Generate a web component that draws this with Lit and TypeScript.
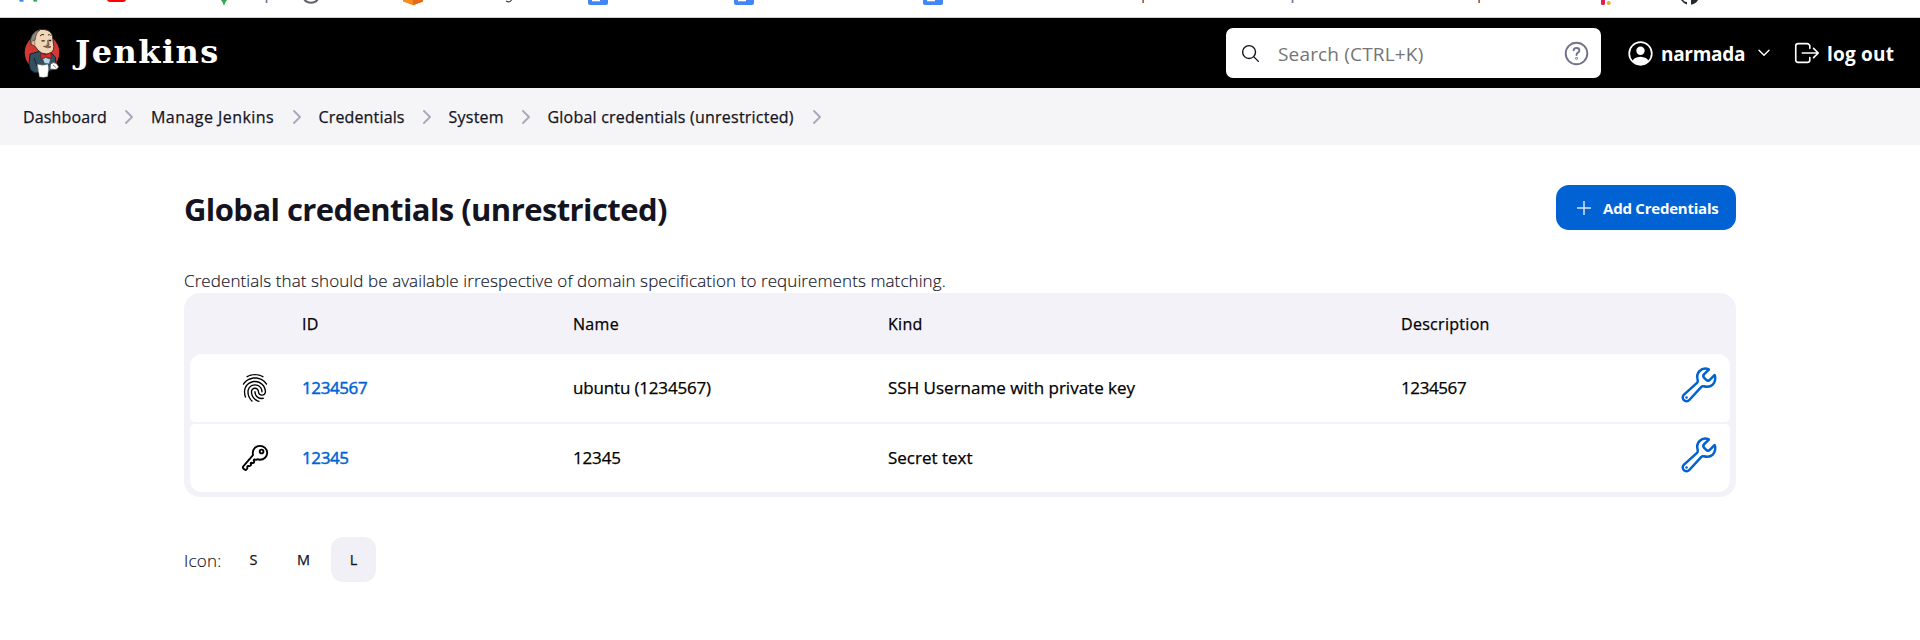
import { LitElement, html, css, svg } from "lit";
import { customElement } from "lit/decorators.js";

const FINGERPRINT =
  "M390.42 75.28a10.45 10.45 0 01-5.32-1.44C340.72 50.08 302.35 40 256.35 40c-45.77 0-89.23 11.28-128.76 33.84C122 77 115.11 74.8 111.87 69a12.4 12.4 0 014.63-16.32A281.81 281.81 0 01256.35 16c49.23 0 92.23 11.28 139.39 36.48a12 12 0 014.85 16.08 11.3 11.3 0 01-10.17 6.72zm-330.79 126a11.73 11.73 0 01-6.7-2.16 12.26 12.26 0 01-2.78-16.8c22.89-33.6 52-60 86.69-78.48 72.58-38.88 165.52-39.12 238.33-.24 34.68 18.48 63.8 44.64 86.69 78a12.29 12.29 0 01-2.78 16.8 11.26 11.26 0 01-16.18-2.88c-20.8-30.24-47.15-54-78.36-70.56-66.34-35.28-151.18-35.28-217.29.24-31.44 16.8-57.79 40.8-78.59 71a10 10 0 01-9.03 5.08zM204.1 491a10.66 10.66 0 01-8.09-3.6C175.9 466.48 165 453 149.55 424c-16-29.52-24.27-65.52-24.27-104.16 0-71.28 58.71-129.36 130.84-129.36S387 248.56 387 319.84a11.56 11.56 0 11-23.11 0c0-58.08-48.32-105.36-107.72-105.36S148.4 261.76 148.4 319.84c0 34.56 7.39 66.48 21.49 92.4 14.8 27.6 25 39.36 42.77 58.08a12.67 12.67 0 010 17 12.44 12.44 0 01-8.56 3.68zm165.75-44.4c-27.51 0-51.78-7.2-71.66-21.36a129.1 129.1 0 01-55-105.36 11.57 11.57 0 1123.12 0 104.28 104.28 0 0044.84 85.44c16.41 11.52 35.6 17 58.72 17a147.41 147.41 0 0024-2.4c6.24-1.2 12.25 3.12 13.4 9.84a11.92 11.92 0 01-9.47 13.92 152.28 152.28 0 01-27.95 2.88zM323.38 496a13 13 0 01-3-.48c-36.76-10.56-60.8-24.72-86-50.4-32.37-33.36-50.16-77.76-50.16-125.28 0-38.88 31.9-70.56 71.19-70.56s71.2 31.68 71.2 70.56c0 25.68 21.5 46.56 48.08 46.56s48.08-20.88 48.08-46.56c0-90.48-75.13-163.92-167.59-163.92-65.65 0-125.75 37.92-152.79 96.72-9 19.44-13.64 42.24-13.64 67.2 0 18.72 1.61 48.24 15.48 86.64 2.32 6.24-.69 13.2-6.7 15.36a11.34 11.34 0 01-14.79-7 276.39 276.39 0 01-16.88-95c0-28.8 5.32-55 15.72-77.76 30.75-67 98.94-110.4 173.6-110.4 105.18 0 190.71 84.24 190.71 187.92 0 38.88-31.9 70.56-71.2 70.56s-71.2-31.68-71.2-70.56C303.5 293.92 282 273 255.42 273s-48.08 20.88-48.08 46.56c0 41 15.26 79.44 43.23 108.24 22 22.56 43 35 75.59 44.16 6.24 1.68 9.71 8.4 8.09 14.64a11.39 11.39 0 01-10.87 9.4z";
const KEY =
  "M218.1 167.17c0 13 0 25.6 4.1 37.4-43.1 50.6-156.9 184.3-167.5 194.5a20.17 20.17 0 00-6.7 15c0 8.5 5.2 16.7 9.6 21.3 6.6 6.9 34.8 33 40 28 15.4-15 18.5-19 24.8-25.2 9.5-9.3-1-28.3 2.3-36s6.8-9.2 12.5-10.4 15.8 2.9 23.7 3c8.3.1 12.8-3.4 19-9.2 5-4.6 8.6-8.9 8.7-15.6.2-9-12.8-20.9-3.1-30.4s23.7 6.2 34 5 22.8-15.5 24.1-21.6-11.7-21.8-9.7-30.7c.7-3 6.8-10 11.4-11s25 6.9 29.6 5.9c5.6-1.2 12.1-7.1 17.4-10.4 15.5 6.7 29.6 9.4 47.7 9.4 68.5 0 124-53.4 124-119.2S408.5 48 340 48s-121.9 53.37-121.9 119.17zM400 144a32 32 0 11-32-32 32 32 0 0132 32z";
const WRENCH =
  "M393.87 190a32.1 32.1 0 01-45.25 0l-26.57-26.57a32.09 32.09 0 010-45.26L382.19 58a1 1 0 00-.3-1.64c-38.82-16.64-89.15-8.16-121.11 23.57-30.58 30.35-32.32 76-21.12 115.84a31.93 31.93 0 01-9.06 32.08L64 380a48.17 48.17 0 1068 68l153.86-167a31.93 31.93 0 0131.6-9.13c39.54 10.59 84.54 8.6 114.72-21.19 32.49-32 39.5-88.56 23.75-120.93a1 1 0 00-1.6-.26z";

const crumbs = [
  { label: "Dashboard", cls: "c1" },
  { label: "Manage Jenkins", cls: "c2" },
  { label: "Credentials", cls: "c3" },
  { label: "System", cls: "c4" },
  { label: "Global credentials (unrestricted)", cls: "c5" },
];

const rows = [
  { icon: "finger", id: "1234567", name: "ubuntu (1234567)", kind: "SSH Username with private key", desc: "1234567" },
  { icon: "key", id: "12345", name: "12345", kind: "Secret text", desc: "" },
];

@customElement("app-root")
export class AppRoot extends LitElement {
  static styles = css`
    :host {
      display: block;
      width: 1920px;
      height: 640px;
      overflow: hidden;
      background: #fff;
      color: #14141f;
      font-family: "Open Sans", "Noto Sans", sans-serif;
      font-size: 16px;
    }
    * { box-sizing: border-box; }
    svg { display: block; flex: none; }
    a { color: inherit; text-decoration: none; white-space: nowrap; }
    .strip { height: 18px; border-bottom: 1px solid #cfcfcf; overflow: hidden; }
    .header {
      height: 70px;
      background: #000;
      color: #fff;
      display: flex;
      align-items: center;
      padding: 0 24px 0 23px;
    }
    .brand { display: flex; align-items: center; }
    .word {
      font: bold 32px/36px "DejaVu Serif", serif;
      letter-spacing: 1.5px;
      margin: -3px 0 0 15px;
    }
    .search {
      width: 375px;
      height: 50px;
      margin: 0 0 0 auto;
      background: #fff;
      border-radius: 7px;
      display: flex;
      align-items: center;
      padding: 0 12px 0 14px;
    }
    .hint { flex: 1; margin-left: 17px; color: #757575; font-size: 19px; letter-spacing: 0.17px; line-height: 26px; padding-top: 2px; }
    .hint span, .user span, .logout span { white-space: nowrap; }
    .user, .logout { display: flex; align-items: center; font-weight: 700; font-size: 19px; line-height: 26px; }
    .user { margin-left: 27px; }
    .user span { margin: 1px 0 0 8px; width: 84px; letter-spacing: -0.3px; }
    .user .caret { margin-left: 13px; }
    .logout { margin-left: 22px; }
    .logout span { margin: 1px 0 0 5px; width: 69px; letter-spacing: 0.2px; }
    .crumbs { height: 57px; background: #f5f5f8; display: flex; align-items: center; padding-left: 23px; }
    .crumbs a { font-size: 16px; line-height: 22px; flex: none; -webkit-text-stroke: 0.25px currentColor; }
    .crumbs svg { margin: 1px 17px 0; }
    .c1 { width: 84px; letter-spacing: 0.15px; }
    .c2 { width: 123.5px; letter-spacing: 0.45px; }
    .c3 { width: 86px; letter-spacing: 0.15px; }
    .c4 { width: 55px; letter-spacing: 0.25px; }
    .c5 { width: 247px; letter-spacing: 0.22px; }
    .main { width: 1552px; margin: 0 184px; padding-top: 40px; }
    .bar { height: 45px; display: flex; align-items: center; justify-content: space-between; }
    h1 { margin: 2px 0 0; font-size: 31px; line-height: 40px; font-weight: 700; letter-spacing: -0.58px; white-space: nowrap; }
    .add {
      width: 180px;
      height: 45px;
      border-radius: 13px;
      background: #0062d3;
      color: #fff;
      display: flex;
      align-items: center;
      padding-left: 21px;
      font-size: 15px;
      font-weight: 700;
      letter-spacing: -0.22px;
    }
    .add svg { margin-right: 12px; }
    .intro { margin: 38px 0 0; height: 25px; line-height: 26px; font-size: 17px; font-weight: 300; letter-spacing: 0.088px; white-space: nowrap; -webkit-text-stroke: 0.15px currentColor; }
    .table { background: #f3f2f8; border-radius: 16px; padding: 0 6px 5px; height: 204px; color: #000; }
    .tr { display: grid; grid-template-columns: 112px 271px 315px 513px 1fr; align-items: center; white-space: nowrap; font-size: 17px; line-height: 24px; -webkit-text-stroke: 0.25px currentColor; }
    .th { height: 61px; font-size: 16px; padding-top: 1px; letter-spacing: 0.3px; }
    .td { height: 68px; background: #fff; border-radius: 5px; margin-bottom: 2px; }
    .td:nth-child(2) { border-radius: 12px 12px 5px 5px; }
    .td:nth-child(3) { border-radius: 5px 5px 12px 12px; }
    .ico { padding-left: 50px; }
    .id { color: #0062d3; letter-spacing: -0.4px; -webkit-text-stroke: 0.45px currentColor; }
    .name { letter-spacing: -0.17px; }
    .num { letter-spacing: -0.4px; }
    .last { display: flex; justify-content: space-between; align-items: center; padding-right: 11px; }
    .wrench { margin-top: -6px; }
    .sizes { display: flex; align-items: center; margin-top: 40px; height: 45px; gap: 5px; }
    .sizes .lab { width: 42px; font-size: 17px; font-weight: 300; padding-top: 2px; letter-spacing: 0.2px; -webkit-text-stroke: 0.15px currentColor; }
    .sz { width: 45px; height: 45px; border-radius: 12px; display: grid; place-items: center; font-size: 14.5px; -webkit-text-stroke: 0.25px currentColor; }
    .on { background: #f1f0f7; }
  `;

  private chevron() {
    return html`<svg width="10" height="14" viewBox="0 0 10 14" fill="none" stroke="#a9a9bb" stroke-width="1.9" stroke-linecap="round" stroke-linejoin="round"><path d="M2 1l6 6-6 6" /></svg>`;
  }

  private stripIcons() {
    const doc = (x: number) => svg`<path d="M${x} 0h20v3q0 2-2 2H${x + 2}q-2 0-2-2z" fill="#4285f4"/><path d="M${x + 4} 0h8v1.3h-8z" fill="#fff"/>`;
    const stem = (x: number) => svg`<path d="M${x} 0h1v3h-1z" fill="#e0a080"/><path d="M${x + 0.8} 0h1v3h-1z" fill="#3c4d80"/>`;
    return html`<svg width="1920" height="17" viewBox="0 0 1920 17">
      <path d="M19 0h4.5v1.8h-3.5z" fill="#4285f4" /><path d="M33 0h4.5l-1 1.8h-2.5z" fill="#34a853" />
      <path d="M107 0h19q-.5 2-3 2h-13q-2.500 0-3-2z" fill="#f00" />
      <path d="M221 0h6l-2 3-.5 2h-1l-.5-2z" fill="#34a853" />
      ${stem(265.5)}
      <path d="M304 -1c3 5 11 5 14 0" fill="none" stroke="#5f6368" stroke-width="2" />
      <path d="M403 0h20v1.500l-10 3.700-10-3.700z" fill="#f68b1f" /><path d="M413 0h10v1.500l-10 3.700z" fill="#e8681a" />
      <path d="M506 1q4 2 5.500-1" fill="none" stroke="#444" stroke-width="1.200" />
      ${doc(588)}${doc(734)}${doc(923)}
      ${stem(1142)}${stem(1291.5)}${stem(1478)}
      <rect x="1601" y="-4" width="4" height="9" rx="1.500" fill="#e01e5a" /><circle cx="1608.700" cy="3" r="2" fill="#ecb22e" />
      <path d="M1681 0q2 3 6 4.500V2q-2 .5-4-2zM1691 0h7q-1.500 3-6 4.500H1691z" fill="#24292f" />
    </svg>`;
  }

  private logo() {
    return html`<svg width="37" height="50" viewBox="0 0 37 50">
      <ellipse cx="19" cy="24.500" rx="17.300" ry="18" fill="#d33833" />
      <path d="M7 26l9-2.500 13 2 3.500 4 .5 7-4 6-17 2.500-4.500-3L6 36z" fill="#335061" stroke="#101820" stroke-width=".9" />
      <path d="M11 30l3 8 12-1M27 29l-2 7" stroke="#142230" fill="none" />
      <path d="M10 6Q14 .8 21 1.500q7 .5 8.500 7l1.300 10q0 7-7 7.500-5.500.2-9-4l-3-4Q7 17 8.500 13z" fill="#f0d6b7" stroke="#33281f" stroke-width=".9" />
      <path d="M8 17Q6.500 12 9 7.500q3-5 8.500-6-4.500 3-4.800 7l-.7 4-1.500-.5-.5 3.500z" fill="#8d8784" stroke="#35302e" stroke-width=".7" />
      <path d="M9 13q2.500-1.500 3 1l-.2 3.500q-2.800 0-3.300-2z" fill="#e2bd98" stroke="#5b4636" stroke-width=".5" />
      <path d="M17 8q2-2.500 4-1.200M25 7q2-1 2.600.5" fill="none" stroke="#33281f" />
      <path d="M18.500 12.800h3.200M25.500 12.500h2.700" stroke="#222" stroke-width="1.300" />
      <path d="M24.500 12q2 3 1.500 5-1 1-2.500.3M20.500 18.500q4.500-1.500 7.500.3-3 2.500-7-.3z" fill="#a68069" stroke="#49382c" stroke-width=".6" />
      <path d="M17.500 25l5 2 5-2.500 1 6-6-1.500-4.500 2.500z" fill="#e02a25" stroke="#661515" stroke-width=".6" />
      <path d="M19.500 31l3-1.500 5 1.500-1 5-5-.5z" fill="#b6d6e5" stroke="#345064" stroke-width=".8" />
      <path d="M14.500 36.500q5 1.500 10.500 0l.3 5.500-.8 6.500q-4 1.300-8 .3z" fill="#fff" stroke="#b9b9b9" stroke-width=".5" />
      <path d="M27.500 36q3-2.500 6-.5l2 3q-.5 3-3.500 3l-5-.5z" fill="#fff" stroke="#444" stroke-width=".7" /><path d="M30 37l3 2.500" stroke="#555" stroke-width=".7" />
    </svg>`;
  }

  render() {
    return html`
      <div class="strip">${this.stripIcons()}</div>
      <header class="header">
        <div class="brand">${this.logo()}<span class="word">Jenkins</span></div>
        <div class="search">
          <svg width="21" height="21" viewBox="0 0 512 512" fill="none" stroke="#14141f" stroke-width="34" stroke-linecap="round"><path d="M221.090 64a157.090 157.090 0 10157.090 157.090A157.100 157.100 0 00221.090 64zM338.290 338.290L448 448" /></svg>
          <div class="hint"><span>Search (CTRL+K)</span></div>
          <svg width="25" height="25" viewBox="0 0 25 25" fill="none" stroke="#73738c" stroke-width="1.900" stroke-linecap="round"><circle cx="12.500" cy="12.500" r="10.800" /><path d="M9.600 9.300q.3-2.300 3-2.300 2.800 0 2.800 2.400 0 1.400-1.500 2.200-1.400.8-1.400 2.400" /><circle cx="12.500" cy="17.300" r=".4" /></svg>
        </div>
        <div class="user">
          <svg width="25" height="25" viewBox="0 0 25 25"><circle cx="12.500" cy="12.500" r="11.300" fill="none" stroke="#fff" stroke-width="1.700" /><circle cx="12.500" cy="9.700" r="4.200" fill="#fff" /><path d="M4.500 20q1.500-4 8-4.300 6.500.3 8 4.300-3.200 4-8 4t-8-4z" fill="#fff" /></svg>
          <span>narmada</span>
          <svg class="caret" width="12" height="8" viewBox="0 0 12 8" fill="none" stroke="#fff" stroke-width="1.400" stroke-linecap="round" stroke-linejoin="round"><path d="M1 1.200l5 5 5-5" /></svg>
        </div>
        <div class="logout">
          <svg width="30" height="30" viewBox="0 0 512 512" fill="none" stroke="#fff" stroke-width="28" stroke-linecap="round" stroke-linejoin="round"><path d="M304 336v40a40 40 0 01-40 40H104a40 40 0 01-40-40V136a40 40 0 0140-40h152c22.090 0 48 17.910 48 40v40M368 336l80-80-80-80M176 256h256" /></svg>
          <span>log out</span>
        </div>
      </header>
      <nav class="crumbs">${crumbs.map((c) => html`<a class=${c.cls}>${c.label}</a>${this.chevron()}`)}</nav>
      <main class="main">
        <div class="bar">
          <h1>Global credentials (unrestricted)</h1>
          <a class="add"><svg width="14" height="14" viewBox="0 0 14 14" stroke="#d5e5f8" stroke-width="1.500"><path d="M7 0v14M0 7h14" /></svg><span>Add Credentials</span></a>
        </div>
        <p class="intro"><span>Credentials that should be available irrespective of domain specification to requirements matching.</span></p>
        <div class="table">
          <div class="tr th"><span></span><span>ID</span><span>Name</span><span>Kind</span><span>Description</span></div>
          ${rows.map(
            (r) => html`<div class="tr td">
              <span class="ico">${r.icon === "finger"
                ? html`<svg width="30" height="30" viewBox="0 0 512 512"><path d=${FINGERPRINT} fill="#000" /></svg>`
                : html`<svg width="30" height="30" viewBox="0 0 512 512"><path d=${KEY} fill="none" stroke="#000" stroke-width="32" stroke-linejoin="round" /></svg>`}</span>
              <a class="id">${r.id}</a>
              <span class="name">${r.name}</span>
              <span>${r.kind}</span>
              <span class="last"><span class="num">${r.desc}</span>
                <svg class="wrench" width="40" height="40" viewBox="0 0 512 512" fill="none" stroke="#0062d3" stroke-width="32" stroke-linejoin="round"><path d=${WRENCH} /><circle cx="96" cy="416" r="16" fill="#0062d3" stroke="none" /></svg></span>
            </div>`,
          )}
        </div>
        <div class="sizes"><span class="lab">Icon:</span><span class="sz">S</span><span class="sz">M</span><span class="sz on">L</span></div>
      </main>
    `;
  }
}
